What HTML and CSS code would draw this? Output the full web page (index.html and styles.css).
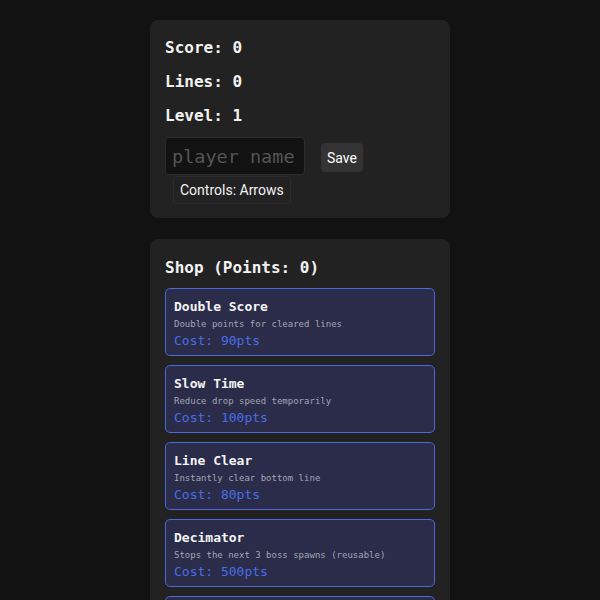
FILE: index.html
```html
<!DOCTYPE html>
<html>
<head>
<meta charset="utf-8">
<link rel="stylesheet" href="styles.css">
</head>
<body>
<div class="page">
  <section class="panel stats">
    <p class="stat">Score: 0</p>
    <p class="stat">Lines: 0</p>
    <p class="stat">Level: 1</p>
    <div class="name-row">
      <input class="name-input" type="text" placeholder="player name">
      <button class="save-btn">Save</button>
    </div>
    <div class="controls">Controls: Arrows</div>
  </section>
  <section class="panel shop">
    <h2 class="shop-title">Shop (Points: 0)</h2>
    <div class="items">
      <div class="item">
        <div class="item-name">Double Score</div>
        <div class="item-desc">Double points for cleared lines</div>
        <div class="item-cost">Cost: 90pts</div>
      </div>
      <div class="item">
        <div class="item-name">Slow Time</div>
        <div class="item-desc">Reduce drop speed temporarily</div>
        <div class="item-cost">Cost: 100pts</div>
      </div>
      <div class="item">
        <div class="item-name">Line Clear</div>
        <div class="item-desc">Instantly clear bottom line</div>
        <div class="item-cost">Cost: 80pts</div>
      </div>
      <div class="item">
        <div class="item-name">Decimator</div>
        <div class="item-desc">Stops the next 3 boss spawns (reusable)</div>
        <div class="item-cost">Cost: 500pts</div>
      </div>
      <div class="item item-empty"></div>
    </div>
  </section>
</div>
</body>
</html>
```

FILE: styles.css
```css
html, body {
  margin: 0;
  padding: 0;
  background: #121212;
  color: #f2f2f2;
  font-family: "DejaVu Sans Mono", "Liberation Mono", monospace;
}
.page {
  display: flex;
  flex-direction: column;
  align-items: center;
  gap: 21px;
  padding-top: 20px;
}
.panel {
  width: 300px;
  box-sizing: border-box;
  background: #222222;
  border-radius: 8px;
  padding: 18px 15px 14px;
}
.stat {
  margin: 0 0 14px;
  font-size: 16px;
  line-height: 20px;
  font-weight: bold;
}
.stat:last-of-type {
  margin-bottom: 0;
}
.name-row {
  display: flex;
  align-items: center;
  gap: 16px;
  margin-top: 11px;
}
.name-input {
  width: 140px;
  height: 38px;
  box-sizing: border-box;
  background: #121212;
  border: 1px solid #2c2c2c;
  border-radius: 4px;
  color: #eee;
  font-family: "DejaVu Sans Mono", monospace;
  font-size: 18.5px;
  padding: 0 6px;
  outline: none;
}
.name-input::placeholder {
  color: #555;
}
.save-btn {
  height: 29px;
  margin-top: 3px;
  padding: 0 6px;
  background: #333;
  color: #fff;
  border: none;
  border-radius: 4px;
  font-family: Roboto, "Liberation Sans", sans-serif;
  font-size: 14px;
}
.controls {
  display: block;
  width: fit-content;
  margin: 1px 0 0 8px;
  height: 28px;
  box-sizing: border-box;
  line-height: 26px;
  padding: 0 6px;
  background: #222;
  border: 1px solid #2c2c2c;
  border-radius: 3px;
  font-family: Roboto, "Liberation Sans", sans-serif;
  font-size: 14px;
  color: #f2f2f2;
}
.shop {
  padding-top: 19px;
}
.shop-title {
  margin: 0 0 10px;
  font-size: 16px;
  line-height: 20px;
  font-weight: bold;
}
.items {
  display: flex;
  flex-direction: column;
  gap: 9px;
}
.item {
  background: #2a2c4a;
  border: 1px solid #4a68dc;
  border-radius: 5px;
  padding: 10px 8px 6px;
}
.item-empty {
  height: 50px;
}
.item-name {
  font-size: 13px;
  line-height: 16px;
  font-weight: bold;
  color: #f4f4f4;
}
.item-desc {
  margin-top: 3px;
  font-size: 9px;
  line-height: 12px;
  color: #a4a6b4;
}
.item-cost {
  margin-top: 3px;
  font-size: 13px;
  line-height: 16px;
  color: #4a6ee6;
}
```
